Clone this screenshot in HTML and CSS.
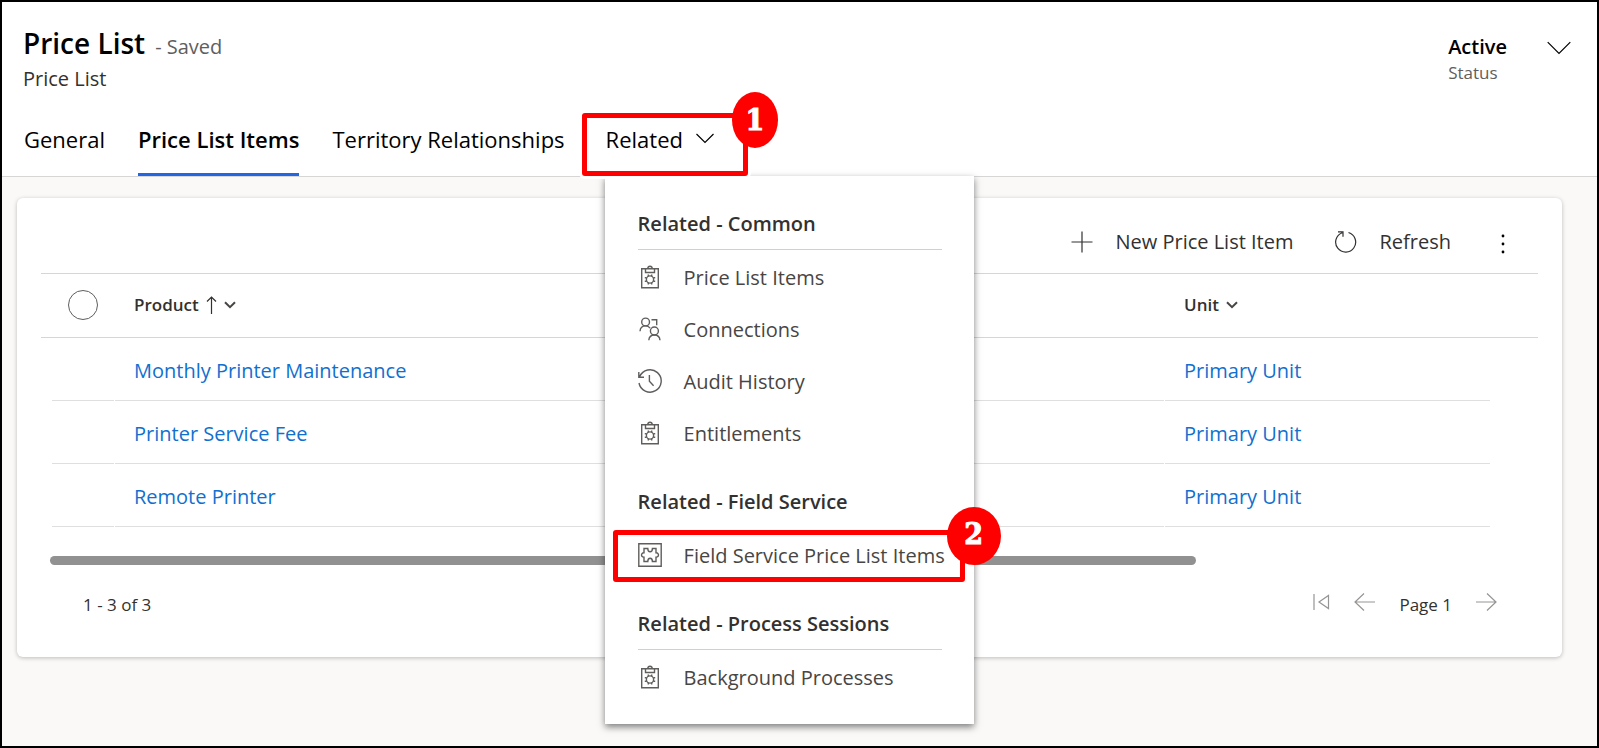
FILE: index.html
```html
<!DOCTYPE html>
<html lang="en">
<head>
<meta charset="utf-8">
<title>Price List</title>
<link rel="stylesheet" href="styles.css">
</head>
<body>
<svg class="sprite" aria-hidden="true">
  <symbol id="clipboard" viewBox="0 0 24 24">
    <path d="M3.700 3.700h16.600v19H3.700z M7.500 3.700v3.800h9V3.700M7.500 3.700h2.200c.3-3.200 4.300-3.200 4.600 0"/>
    <circle cx="12" cy="14.500" r="3.600"/>
    <path d="M10.300 11.300V9.400M13.700 11.300V9.400M10.300 17.700v1.900M13.700 17.700v1.900M8.700 12.800H6.800M8.700 16.200H6.800M15.300 12.800h1.900M15.300 16.200h1.900"/>
  </symbol>
  <symbol id="connections" viewBox="0 0 24 24">
    <circle cx="7.600" cy="5" r="3.900"/>
    <path d="M2 14.200c.3-3.400 2.600-5.300 5.600-5.300 2 0 3.500.8 4.500 2.300M13.500 2.800h5.200v5.400"/>
    <circle cx="16.400" cy="14" r="4"/>
    <path d="M10.800 23.300c.3-3.400 2.600-5.300 5.600-5.300s5.300 1.900 5.600 5.300"/>
  </symbol>
  <symbol id="history" viewBox="0 0 24 24">
    <path d="M1.700 7.600A11.200 11.200 0 1 1 1 14M.8 3v5.200H6M11.400 6v6.300l4.200 4.400"/>
  </symbol>
  <symbol id="puzzle" viewBox="0 0 24 24">
    <path d="M.8.800h22.400v22.400H.8z"/>
    <path d="M6 5.500h3.800c0 4.300 4.600 4.300 4.600 0H18v4.300c3.300-.3 3.300 4.700 0 4.400v4.300h-3.600c0-4.300-4.600-4.300-4.600 0H6v-4.300c-3.300.3-3.300-4.700 0-4.400z"/>
  </symbol>
</svg>
<main class="page">
  <header class="header">
    <div class="summary">
      <div>
        <div class="title-line"><h1 class="title">Price List</h1><span class="saved">- Saved</span></div>
        <p class="entity">Price List</p>
      </div>
      <div class="status">
        <div>
          <div class="status-value">Active</div>
          <div class="status-label">Status</div>
        </div>
        <button class="bare expand" aria-label="More header fields">
          <svg class="line" width="24" height="14" viewBox="0 0 24 14"><path d="M.7 1.200 12 12.500 23.300 1.200"/></svg>
        </button>
      </div>
    </div>
    <nav class="tabs">
      <button class="tab">General</button>
      <button class="tab tab-active">Price List Items</button>
      <button class="tab">Territory Relationships</button>
      <div class="related">
        <button class="tab" aria-expanded="true">Related
          <svg class="line" width="18" height="11" viewBox="0 0 18 11"><path d="M.5 1 9 9.500 17.500 1"/></svg>
        </button>
        <div class="callout callout-tab"><span class="badge">1</span></div>
        <div class="menu">
          <section class="group">
            <h2 class="group-title">Related - Common</h2>
            <a class="item" href="#"><svg class="icon"><use href="#clipboard"/></svg>Price List Items</a>
            <a class="item" href="#"><svg class="icon"><use href="#connections"/></svg>Connections</a>
            <a class="item" href="#"><svg class="icon"><use href="#history"/></svg>Audit History</a>
            <a class="item" href="#"><svg class="icon"><use href="#clipboard"/></svg>Entitlements</a>
          </section>
          <section class="group">
            <h2 class="group-title">Related - Field Service</h2>
            <div class="marked">
              <a class="item" href="#"><svg class="icon"><use href="#puzzle"/></svg>Field Service Price List Items</a>
              <div class="callout callout-item"><span class="badge badge-wide">2</span></div>
            </div>
          </section>
          <section class="group">
            <h2 class="group-title">Related - Process Sessions</h2>
            <a class="item" href="#"><svg class="icon"><use href="#clipboard"/></svg>Background Processes</a>
          </section>
        </div>
      </div>
    </nav>
  </header>

  <section class="card">
    <div class="toolbar">
      <button class="bare command">
        <svg class="line" width="22" height="22" viewBox="0 0 22 22"><path d="M11 .5v21M.5 11h21"/></svg>New Price List Item
      </button>
      <button class="bare command">
        <svg class="line" width="22" height="22" viewBox="0 0 22 22"><path d="M13.500 1.500A10 10 0 1 1 7.200 1.700M3 .800h5v5"/></svg>Refresh
      </button>
      <button class="bare more" aria-label="More commands">
        <svg width="4" height="20" viewBox="0 0 4 20"><circle cx="2" cy="2" r="1.400"/><circle cx="2" cy="10" r="1.400"/><circle cx="2" cy="18" r="1.400"/></svg>
      </button>
    </div>
    <table class="grid">
      <colgroup><col class="col-check"><col><col class="col-unit"></colgroup>
      <thead>
        <tr>
          <th><input class="check" type="checkbox" aria-label="Select all rows"></th>
          <th><button class="bare sort">Product
            <svg class="line" width="11" height="18" viewBox="0 0 11 18"><path d="M5.500 18V1M1 5.500 5.500 1 10 5.500"/></svg>
            <svg class="caret" width="12" height="8" viewBox="0 0 12 8"><path d="M1 1.200 6 6.200 11 1.200"/></svg></button></th>
          <th><button class="bare sort">Unit
            <svg class="caret" width="12" height="8" viewBox="0 0 12 8"><path d="M1 1.200 6 6.200 11 1.200"/></svg></button></th>
        </tr>
      </thead>
      <tbody>
        <tr><td><div class="cell"></div></td><td><div class="cell"><a href="#">Monthly Printer Maintenance</a></div></td><td><div class="cell"><a href="#">Primary Unit</a></div></td></tr>
        <tr><td><div class="cell"></div></td><td><div class="cell"><a href="#">Printer Service Fee</a></div></td><td><div class="cell"><a href="#">Primary Unit</a></div></td></tr>
        <tr><td><div class="cell"></div></td><td><div class="cell"><a href="#">Remote Printer</a></div></td><td><div class="cell"><a href="#">Primary Unit</a></div></td></tr>
      </tbody>
    </table>
    <div class="scroll"><div class="thumb"></div></div>
    <footer class="footer">
      <span>1 - 3 of 3</span>
      <div class="pager">
        <button class="bare" aria-label="First page"><svg class="line" width="17" height="18" viewBox="0 0 17 18"><path d="M1 1v16M15.500 2.500v13L6 9z"/></svg></button>
        <button class="bare" aria-label="Previous page"><svg class="line" width="21" height="18" viewBox="0 0 21 18"><path d="M21 9H1M10 .5 1 9l9 8.500"/></svg></button>
        <span class="page-number">Page 1</span>
        <button class="bare" aria-label="Next page"><svg class="line" width="21" height="18" viewBox="0 0 21 18"><path d="M0 9h20M11 .5 20 9l-9 8.500"/></svg></button>
      </div>
    </footer>
  </section>
</main>
</body>
</html>
```
FILE: styles.css
```css
* { box-sizing: border-box; }

body {
  margin: 0;
  font-family: "Open Sans", "Noto Sans", sans-serif;
  font-size: 20px;
  line-height: 28px;
  color: #323130;
}

h1, h2, p { margin: 0; }

svg { display: block; flex: none; }

.sprite { position: absolute; width: 0; height: 0; }

.line { fill: none; stroke: currentColor; stroke-width: 1.2; }

.bare {
  display: flex;
  align-items: center;
  padding: 0;
  border: 0;
  background: none;
  color: inherit;
  font: inherit;
}

.page {
  min-height: 100vh;
  border: 2px solid #000;
  background: #faf9f8;
}

/* Header */
.header {
  padding: 21px 26px 0 21px;
  border-bottom: 1px solid #d6d6d6;
  background: #fff;
}

.summary { display: flex; justify-content: space-between; }

.title-line { display: flex; align-items: baseline; gap: 10px; }

.title { font-size: 28px; line-height: 40px; font-weight: 600; color: #000; }

.saved { color: #605e5c; }

.entity { margin-top: 2px; font-weight: 500; }

.status { display: flex; align-items: flex-start; gap: 40px; padding-top: 11px; }

.status-value { font-weight: 600; line-height: 26px; color: #000; }

.status-label { font-size: 17px; line-height: 26px; color: #605e5c; }

.expand { padding-top: 7px; color: #000; }

.tabs { display: flex; gap: 33px; padding: 15px 0 0 1px; }

.tab {
  display: flex;
  align-items: center;
  gap: 13px;
  height: 68px;
  padding: 0 0 4px;
  border: 0;
  border-bottom: 3px solid transparent;
  background: none;
  color: #000;
  font: inherit;
  font-size: 22px;
}

.tab-active { border-bottom-color: #2266e3; font-weight: 600; }

.related { position: relative; margin-left: 8px; }

/* Related menu */
.menu {
  position: absolute;
  top: 100%;
  left: -1px;
  z-index: 1;
  width: 369px;
  padding: 28px 32px 20px 33px;
  background: #fff;
  box-shadow: 0 3px 7px rgba(0, 0, 0, 0.5);
}

.group + .group { padding-top: 22px; }

.group-title {
  padding: 6px 0 11px;
  margin-bottom: 2px;
  border-bottom: 1px solid #d2d0ce;
  font-size: 20px;
  line-height: 28px;
  font-weight: 600;
}

.item {
  display: flex;
  align-items: center;
  gap: 22px;
  height: 52px;
  color: #484644;
  text-decoration: none;
  white-space: nowrap;
}

.icon {
  width: 24px;
  height: 24px;
  margin-bottom: 2px;
  fill: none;
  stroke: #605e5c;
  stroke-width: 1.4;
}

.marked { position: relative; }

/* Numbered callouts */
.callout {
  position: absolute;
  z-index: 2;
  border: 5px solid #f00;
  border-radius: 3px;
  box-shadow: 0 0 0 3px #fff;
  pointer-events: none;
}

.callout-tab { inset: 5px -34px 0 -24px; }

.callout-item { inset: 0 -23px 0 -25px; }

.badge {
  position: absolute;
  top: -26px;
  right: -35px;
  display: grid;
  place-items: center;
  width: 46px;
  height: 56px;
  border-radius: 50%;
  background: #f00;
  color: #fff;
  font-family: "DejaVu Serif Condensed", "DejaVu Serif", serif;
  font-size: 30px;
  font-weight: 700;
  -webkit-text-stroke: 1px #fff;
}

.badge-wide { top: -28px; right: -41px; width: 54px; height: 58px; padding-bottom: 4px; }

/* Grid card */
.card {
  margin: 21px 35px 0 15px;
  padding: 13px 24px 38px;
  border-radius: 6px;
  background: #fff;
  box-shadow: 0 1px 4px rgba(0, 0, 0, 0.25);
}

.toolbar {
  display: flex;
  justify-content: flex-end;
  align-items: center;
  gap: 42px;
  height: 62px;
  padding-right: 33px;
}

.command { gap: 22px; }

.more { margin-left: 8px; padding-top: 4px; }

.grid {
  width: 100%;
  border-top: 1px solid #d6d6d6;
  border-collapse: separate;
  border-spacing: 0;
  table-layout: fixed;
}

.col-check { width: 74px; }

.col-unit { width: 373px; }

th {
  height: 64px;
  padding: 0 0 2px 19px;
  border-bottom: 1px solid #d6d6d6;
  text-align: left;
  font-size: 17px;
  font-weight: 600;
}

th:first-child { padding-left: 27px; }

td { padding: 0; }

td:first-child { padding-left: 11px; }

td:last-child { padding-right: 47px; }

.cell {
  display: flex;
  align-items: center;
  height: 63px;
  margin-right: 1px;
  padding: 4px 0 0 19px;
  border-bottom: 1px solid #e1dfdd;
}

.cell a { color: #1170cf; text-decoration: none; }

.check {
  display: block;
  width: 30px;
  height: 30px;
  margin: 0;
  appearance: none;
  border: 1px solid #605e5c;
  border-radius: 50%;
}

.sort { gap: 7px; }

.caret { fill: none; stroke: #484644; stroke-width: 2; }

.scroll { padding: 29px 0 0 9px; }

.thumb { width: 77%; height: 9px; border-radius: 5px; background: #919191; }

.footer {
  display: flex;
  justify-content: space-between;
  align-items: center;
  padding: 26px 41px 0 42px;
  font-size: 17px;
}

.pager { display: flex; align-items: center; gap: 24px; }

.pager .bare { margin-bottom: 6px; color: #979593; }
```
